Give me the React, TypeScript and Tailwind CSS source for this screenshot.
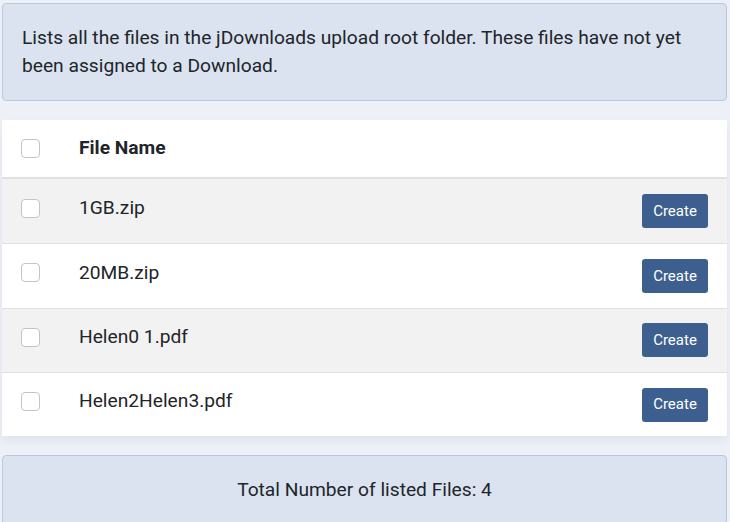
const files = ["1GB.zip", "20MB.zip", "Helen0 1.pdf", "Helen2Helen3.pdf"];

function Box() {
  return (
    <span className="block w-[19px] h-[19px] rounded-[4px] border border-[#c4c4c4] bg-white" />
  );
}

export default function App() {
  return (
    <div
      className="min-h-[522px] bg-[#edf1f7] pl-[2px] pr-[3px] pt-[3px] text-[#212529]"
      style={{ fontFamily: "Roboto, 'Liberation Sans', sans-serif" }}
    >
      <div className="rounded-[4px] border border-[#b9c8df] bg-[#dbe3f0] px-[19px] py-[20px] text-[19.2px] leading-[28px]">
        Lists all the files in the jDownloads upload root folder. These files have not yet
        been assigned to a Download.
      </div>

      <div className="mt-[19px] bg-white shadow-[0_4px_8px_rgba(0,0,0,0.06)]">
        <div className="flex h-[59px] items-center border-b-2 border-[#dee2e6] pl-[19px]">
          <Box />
          <span className="ml-[39px] text-[19.2px] font-bold">File Name</span>
        </div>
        {files.map((name, i) => (
          <div
            key={name}
            className={
              "flex h-[64.3px] items-center pl-[19px] pr-[19px] " +
              (i > 0 ? "border-t border-[#dee2e6] " : "") +
              (i % 2 === 0 ? "bg-[#f2f2f2]" : "bg-white")
            }
          >
            <div className="mb-[6px] flex flex-1 items-center">
              <Box />
              <span className="ml-[39px] text-[19.2px]">{name}</span>
            </div>
            <button className="h-[34px] w-[66px] rounded-[3px] bg-[#3c5f8f] text-[15px] text-white">
              Create
            </button>
          </div>
        ))}
      </div>

      <div className="mt-[19px] rounded-[4px] border border-[#b9c8df] bg-[#dbe3f0] px-[19px] py-[20px] text-center text-[19.2px] leading-[28px]">
        Total Number of listed Files: 4
      </div>
    </div>
  );
}
